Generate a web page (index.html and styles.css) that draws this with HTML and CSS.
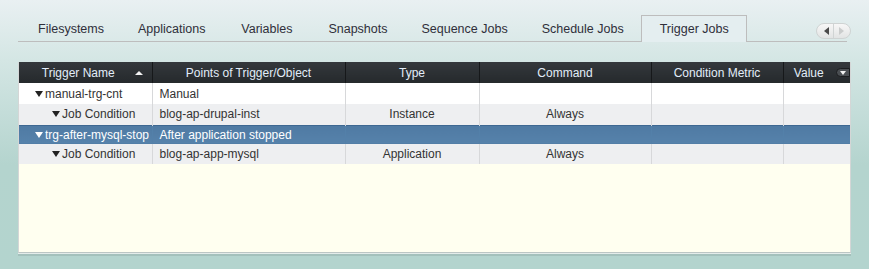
FILE: index.html
```html
<!DOCTYPE html>
<html lang="en">
<head>
  <meta charset="UTF-8" />
  <title>Trigger Jobs</title>
  <link rel="stylesheet" href="styles.css">
</head>
<body>

<div class="tabbar">
  <ul class="tabs">
    <li>Filesystems</li>
    <li>Applications</li>
    <li>Variables</li>
    <li>Snapshots</li>
    <li>Sequence Jobs</li>
    <li>Schedule Jobs</li>
    <li class="active">Trigger Jobs</li>
  </ul>
  <div class="scroller">
    <span class="arrow-left"></span>
    <span class="arrow-right"></span>
  </div>
</div>

<div class="grid">
  <table>
    <colgroup>
      <col style="width:133px">
      <col style="width:193px">
      <col style="width:134px">
      <col style="width:172px">
      <col style="width:132px">
      <col>
    </colgroup>
    <thead>
      <tr>
        <th class="sorted">Trigger Name <span class="sort-up"></span></th>
        <th>Points of Trigger/Object</th>
        <th>Type</th>
        <th>Command</th>
        <th>Condition Metric</th>
        <th class="menu-col">Value <span class="menu-btn"></span></th>
      </tr>
    </thead>
    <tbody>
      <tr class="odd">
        <td class="tree lvl1"><span class="twisty"></span>manual-trg-cnt</td>
        <td>Manual</td>
        <td></td>
        <td></td>
        <td></td>
        <td></td>
      </tr>
      <tr class="even">
        <td class="tree lvl2"><span class="twisty"></span>Job Condition</td>
        <td>blog-ap-drupal-inst</td>
        <td class="c">Instance</td>
        <td class="c">Always</td>
        <td></td>
        <td></td>
      </tr>
      <tr class="selected">
        <td class="tree lvl1"><span class="twisty"></span>trg-after-mysql-stop</td>
        <td>After application stopped</td>
        <td></td>
        <td></td>
        <td></td>
        <td></td>
      </tr>
      <tr class="even last">
        <td class="tree lvl2"><span class="twisty"></span>Job Condition</td>
        <td>blog-ap-app-mysql</td>
        <td class="c">Application</td>
        <td class="c">Always</td>
        <td></td>
        <td></td>
      </tr>
    </tbody>
  </table>
  <div class="filler"></div>
</div>

</body>
</html>
```

FILE: styles.css
```css
* { box-sizing: border-box; }
body {
  margin: 0;
  height: 269px;
  overflow: hidden;
  font-family: "Liberation Sans", Arial, sans-serif;
  color: #333;
  background: linear-gradient(to bottom, #e9f0f2 0, #d4e6e4 60px, #b4d4ce 165px, #b3d4ce 100%);
}
.tabbar {
  display: flex;
  align-items: flex-end;
  padding: 15px 0 0 18px;
}
.tabs {
  display: flex;
  list-style: none;
  margin: 0;
  padding: 0 0 0 3px;
  width: 829px;
  height: 27px;
  border-bottom: 1px solid #bdbdbd;
}
.tabs li {
  min-width: 89px;
  height: 26px;
  line-height: 26px;
  padding: 0 16px;
  text-align: center;
  font-size: 12.5px;
  color: #2f2f3a;
  border: 1px solid transparent;
  border-bottom: none;
}
.tabs li.active {
  border-color: #bdbdbd;
  background: #e4eef0;
  height: 27px;
  margin-bottom: -1px;
  padding: 0 17px 0 18px;
}
.scroller {
  display: flex;
  width: 35px;
  height: 16px;
  margin: 0 0 3px -31px;
  border: 1px solid #cfd3d3;
  border-radius: 8px;
  background: linear-gradient(to bottom, #f7f7f7, #e2e4e4);
}
.scroller span {
  flex: 1;
  display: flex;
  align-items: center;
  justify-content: center;
}
.scroller .arrow-left {
  border-right: 1px solid #d0d4d4;
}
.arrow-left::before {
  content: '';
  margin-left: 3px;
  border-style: solid;
  border-width: 4px 5px 4px 0;
  border-color: transparent #4a4a4a transparent transparent;
}
.arrow-right::before {
  content: '';
  margin-right: 2px;
  border-style: solid;
  border-width: 4px 0 4px 5px;
  border-color: transparent transparent transparent #cacccc;
}
.grid {
  display: flex;
  flex-direction: column;
  margin: 20px 0 0 18px;
  width: 833px;
  height: 191px;
  background: #fffff0;
  border-right: 1px solid #d4d6d6;
  border-left: 1px solid #d4d6d6;
  border-bottom: 1px solid #bcc6c4;
  box-shadow: 0 1px 0 #e4ecea, 0 3px 0 #a4c1bc;
}
.grid table {
  width: 100%;
  border-collapse: collapse;
  table-layout: fixed;
  font-size: 12px;
}
.grid th {
  height: 21px;
  padding: 0 4px;
  font-weight: normal;
  color: #e2edf9;
  background: linear-gradient(to bottom, #34383c, #25292c);
  border-left: 1px solid #16181a;
  position: relative;
  white-space: nowrap;
  overflow: hidden;
}
.grid th:first-child { border-left: none; }
.grid th.sorted { padding-right: 18px; }
.sort-up {
  position: absolute;
  right: 9px;
  top: 9px;
  border-style: solid;
  border-width: 0 4px 4px 4px;
  border-color: transparent transparent #f2f2f2 transparent;
}
.grid th.menu-col { padding-right: 20px; }
.menu-btn {
  position: absolute;
  right: 0;
  top: 6px;
  width: 14px;
  height: 9px;
  border-radius: 5px 0 0 5px;
  background: #4a4e52;
  border: 1px solid #1b1d1f;
}
.menu-btn::after {
  content: '';
  position: absolute;
  left: 3px;
  top: 2px;
  border-style: solid;
  border-width: 4px 3px 0 3px;
  border-color: #f0f0f0 transparent transparent transparent;
}
.grid td {
  height: 21px;
  padding: 0 7px;
  white-space: nowrap;
  overflow: hidden;
  border-left: 1px solid #d7d8da;
}
.grid td:first-child { border-left: none; }
.grid td.c { text-align: center; }
.grid tr.odd td { background: #fff; }
.grid tr.even td { background: #eeeff1; }
.grid tr.last td { height: 20px; }
.grid tr.selected td {
  height: 19px;
  color: #fff;
  background: linear-gradient(to bottom, #4f7aa3, #5682ab);
  border-left: 1px solid #5380a9;
  border-top: 1px solid #3e6892;
}
.grid tr.selected td:first-child { border-left: none; }
.grid td.tree { padding-right: 3px; text-overflow: clip; }
.grid td.lvl1 { padding-left: 16px; }
.grid td.lvl2 { padding-left: 33px; }
.twisty {
  display: inline-block;
  margin-right: 2px;
  vertical-align: 1px;
  border-style: solid;
  border-width: 6px 4px 0 4px;
  border-color: #222 transparent transparent transparent;
}
.selected .twisty { border-top-color: #fff; }
.filler { flex: 1; }
```
